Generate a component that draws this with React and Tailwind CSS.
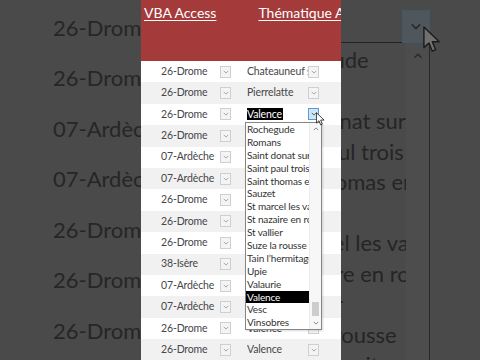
const rows = [
  ['26-Drome', 'Chateauneuf sur Lez'],
  ['26-Drome', 'Pierrelatte'],
  ['26-Drome', 'Valence'],
  ['26-Drome', 'Valence'],
  ['07-Ardèche', 'Valence'],
  ['07-Ardèche', 'Valence'],
  ['26-Drome', 'Valence'],
  ['26-Drome', 'Valence'],
  ['26-Drome', 'Valence'],
  ['38-Isère', 'Valence'],
  ['07-Ardèche', 'Valence'],
  ['07-Ardèche', 'Valence'],
  ['26-Drome', 'Valence'],
  ['26-Drome', 'Valence'],
];

const options = [
  'Rochegude',
  'Romans',
  'Saint donat sur l’Herbasse',
  'Saint paul trois châteaux',
  'Saint thomas en royans',
  'Sauzet',
  'St marcel les valence',
  'St nazaire en royans',
  'St vallier',
  'Suze la rousse',
  'Tain l’hermitage',
  'Upie',
  'Valaurie',
  'Valence',
  'Vesc',
  'Vinsobres',
];

const zoomLeft = ['26-Drome', '26-Drome', '07-Ardèche', '07-Ardèche', '26-Drome', '26-Drome', '26-Drome'];

function Chevron({ className, up = false, width = 1 }) {
  return (
    <svg viewBox="0 0 8 5" className={className}>
      <path d={up ? 'M1 4 L4 1 L7 4' : 'M1 1 L4 4 L7 1'} fill="none" stroke="currentColor" strokeWidth={width} />
    </svg>
  );
}

function Cursor({ className, fill = '#fff', stroke = '#000' }) {
  return (
    <svg viewBox="0 0 10 15" className={className}>
      <path d="M0.5 0.5 L0.5 12 L3.3 9.4 L5.2 14 L7 13.2 L5.2 8.7 L9 8.7 Z" fill={fill} stroke={stroke} strokeWidth="0.8" strokeLinejoin="round" />
    </svg>
  );
}

function DropButton({ active = false }) {
  return (
    <div
      className={`flex h-[12px] w-[11px] shrink-0 items-center justify-center border ${
        active ? 'border-[#5b9bd8] bg-[#cfe5f8] text-[#333]' : 'border-[#cfcfcf] bg-[#f4f4f4] text-[#8c8c8c]'
      }`}
    >
      <Chevron className="h-[4px] w-[6px]" />
    </div>
  );
}

function Row({ index, dept, city }) {
  const selected = index === 2;
  return (
    <div className={`flex h-[21.4px] items-center text-[10.5px] tracking-[-0.15px] text-[#474747] ${index % 2 ? 'bg-[#f1f1f1]' : 'bg-white'}`}>
      <div className="w-[79px] shrink-0 overflow-hidden whitespace-nowrap pl-[20px]">{dept}</div>
      <DropButton />
      <div className="ml-[16px] w-[61px] shrink-0 overflow-hidden whitespace-nowrap">
        {selected ? <span className="bg-black pr-[1px] text-white">{city}</span> : city}
      </div>
      <DropButton active={selected} />
    </div>
  );
}

export default function App() {
  return (
    <div className="flex h-[360px] w-[480px] overflow-hidden bg-[#4a4a4a] font-[Lato,'Liberation_Sans',sans-serif]">
      {/* zoomed backdrop, left */}
      <div className="w-[141px] shrink-0 overflow-hidden pt-[2px] text-[22px] text-[#262626]">
        {zoomLeft.map((t, i) => (
          <div key={i} className="flex h-[50.5px] items-center whitespace-nowrap pl-[53px]">
            {t}
          </div>
        ))}
      </div>

      {/* sheet */}
      <div className="relative w-[200px] shrink-0 overflow-hidden bg-white">
        <div className="flex h-[61px] items-start whitespace-nowrap bg-[#a43a3a] pt-[4px] text-[14px] leading-[18px] text-white">
          <span className="ml-[3px] shrink-0 underline decoration-1 underline-offset-2">VBA Access</span>
          <span className="ml-[42px] shrink-0 underline decoration-1 underline-offset-2">Thématique Associée</span>
        </div>
        {rows.map(([dept, city], i) => (
          <Row key={i} index={i} dept={dept} city={city} />
        ))}

        {/* open combo list */}
        <div className="absolute left-[104px] top-[122px] flex h-[208px] w-[77px] border border-[#868686] bg-white shadow-[1px_1px_2px_rgba(0,0,0,0.15)]">
          <div className="min-w-0 flex-1 overflow-hidden text-[10px] tracking-[-0.15px] text-[#333]">
            {options.map((o, i) => (
              <div
                key={o}
                className={`h-[12.9px] whitespace-nowrap pl-[1px] leading-[12.9px] ${i === 13 ? 'bg-black text-white' : ''}`}
              >
                {o}
              </div>
            ))}
          </div>
          <div className="flex w-[12px] shrink-0 flex-col border-l border-[#ececec] bg-[#f7f7f7] text-[#606060]">
            <div className="flex h-[12px] items-center justify-center">
              <Chevron up className="h-[4px] w-[6px]" />
            </div>
            <div className="flex flex-1 flex-col justify-end pb-[1px]">
              <div className="mx-[2px] h-[14px] bg-[#cdcdcd]" />
            </div>
            <div className="flex h-[12px] items-center justify-center">
              <Chevron className="h-[4px] w-[6px]" />
            </div>
          </div>
        </div>

        <Cursor className="absolute left-[175px] top-[112px] h-[14px] w-[9px]" />
      </div>

      {/* zoomed backdrop, right */}
      <div className="relative flex-1 overflow-hidden">
        <div className="flex">
          <div className="h-[43px] w-[61px] shrink-0 border-b border-[#232323]" />
          <div className="mt-[10px] flex h-[33px] w-[28px] shrink-0 items-center justify-center border border-[#3d5a6c] bg-[#4f575d] text-[#2a2a2a]">
            <Chevron className="h-[7px] w-[12px]" width={1.2} />
          </div>
        </div>
        <div className="flex h-[317px]">
          <div className="w-[65px] shrink-0 overflow-hidden pt-[2px] text-[22px] text-[#252525]">
            {options.map((o) => (
              <div key={o} className="ml-[-80px] h-[30.5px] whitespace-nowrap leading-[30.5px]">
                {o}
              </div>
            ))}
          </div>
          <div className="flex w-[24px] shrink-0 justify-center border-r border-[#282828] bg-[#4d4d4d] pt-[10px] text-[#2a2a2a]">
            <Chevron up className="h-[6px] w-[12px]" width={1.2} />
          </div>
        </div>
        <Cursor className="absolute left-[82px] top-[26px] h-[27px] w-[18px]" fill="#707070" stroke="#1c1c1c" />
      </div>
    </div>
  );
}
